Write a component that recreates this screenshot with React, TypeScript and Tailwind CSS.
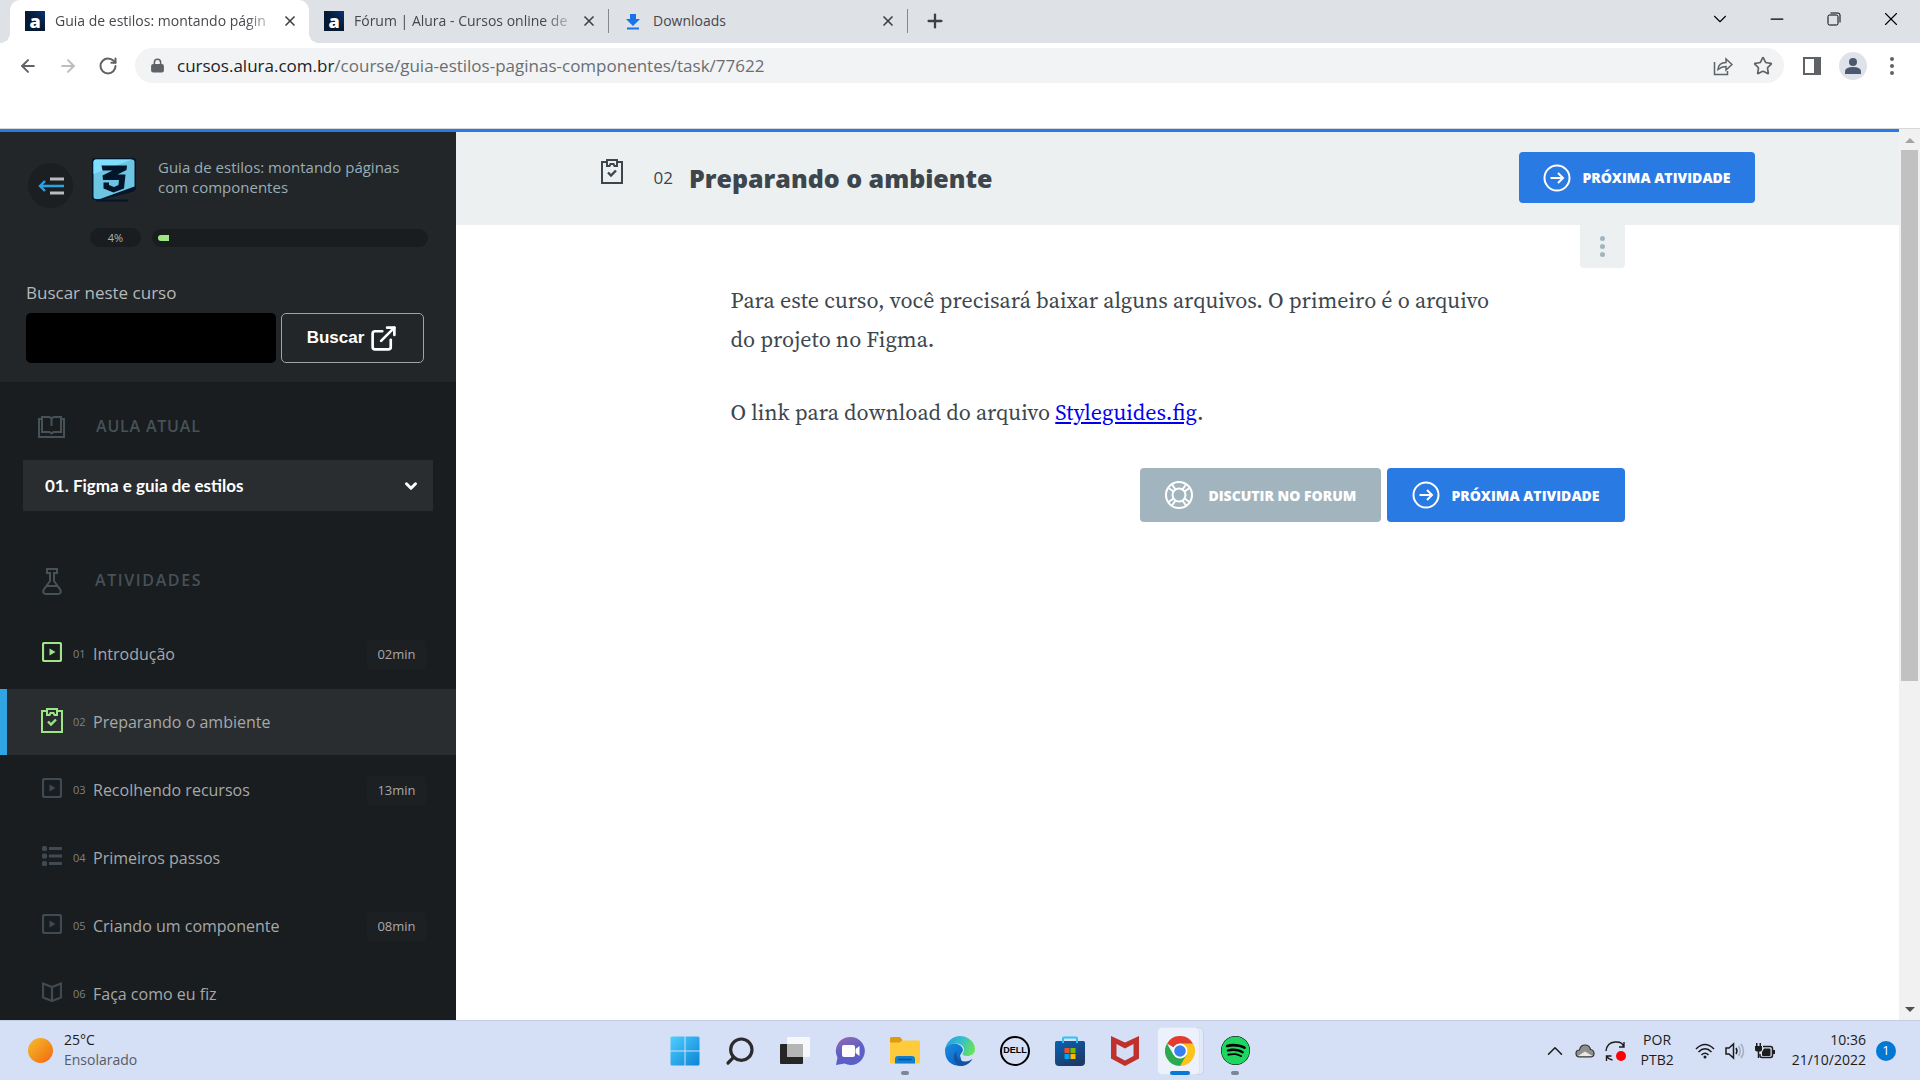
import React, { useState } from "react";
import {
  ArrowLeft,
  ArrowRight,
  ChevronDown,
  ChevronUp,
  ExternalLink,
  Lock,
  Minus,
  Plus,
  RotateCw,
  Search,
  Star,
  X,
} from "lucide-react";
import { FaSpotify } from "react-icons/fa";

// ===== TYPES =====
type ActivityKind = "video" | "clipboard" | "list" | "book";

interface Activity {
  number: string;
  title: string;
  kind: ActivityKind;
  duration?: string;
  done?: boolean;
}

interface Tab {
  title: string;
  icon: "alura" | "download";
}

// ===== DATA =====
const tabs: Tab[] = [
  { title: "Guia de estilos: montando págin", icon: "alura" },
  { title: "Fórum | Alura - Cursos online de", icon: "alura" },
  { title: "Downloads", icon: "download" },
];

const activities: Activity[] = [
  { number: "01", title: "Introdução", kind: "video", duration: "02min", done: true },
  { number: "02", title: "Preparando o ambiente", kind: "clipboard", done: true },
  { number: "03", title: "Recolhendo recursos", kind: "video", duration: "13min" },
  { number: "04", title: "Primeiros passos", kind: "list" },
  { number: "05", title: "Criando um componente", kind: "video", duration: "08min" },
  { number: "06", title: "Faça como eu fiz", kind: "book" },
];

const progress = 4;

// ===== ICONS =====
function ClipboardIcon({ className }: { className?: string }) {
  return (
    <svg viewBox="0 0 22 25" className={className} fill="none" stroke="currentColor" strokeWidth="2">
      <path d="M5.500 3H1v21h20V3h-4.500" />
      <path d="M6 1h10v6h-2.500L12.500 5h-3L8.500 7H6z" />
      <path d="M7 13.500l3 3 5-5" strokeWidth="2.400" />
    </svg>
  );
}

function ActivityIcon({ kind }: { kind: ActivityKind }) {
  if (kind === "clipboard") {
    return <ClipboardIcon className="h-[25px] w-[22px]" />;
  }
  if (kind === "list") {
    return (
      <svg viewBox="0 0 20 20" className="size-5" fill="currentColor">
        <rect x="0" y="0" width="5" height="5" rx="1.500" />
        <rect x="0" y="7.500" width="5" height="5" rx="1.500" />
        <rect x="0" y="15" width="5" height="5" rx="1.500" />
        <path d="M7 1h13v3H7zM7 8.500h13v3H7zM7 16h13v3H7z" />
      </svg>
    );
  }
  if (kind === "book") {
    return (
      <svg viewBox="0 0 20 20" className="size-5" fill="none" stroke="currentColor" strokeWidth="2.200">
        <path d="M1 1.500l9 3.500 9-3.500v14L10 19l-9-3.500zM10 5v14" />
      </svg>
    );
  }
  return (
    <svg viewBox="0 0 20 20" className="size-5" fill="none" stroke="currentColor" strokeWidth="2.200">
      <rect x="1" y="1" width="18" height="18" rx="1.500" />
      <path d="M7.500 6.500v7l6-3.500z" fill="currentColor" stroke="none" />
    </svg>
  );
}

function CircleArrowIcon() {
  return (
    <svg viewBox="0 0 28 28" className="size-7" fill="none" stroke="currentColor" strokeWidth="2">
      <circle cx="14" cy="14" r="12.500" />
      <path d="M7.500 14h12M15 9l5 5-5 5" />
    </svg>
  );
}

function LifebuoyIcon() {
  return (
    <svg viewBox="0 0 28 28" className="size-7" fill="none" stroke="currentColor" strokeWidth="2">
      <circle cx="14" cy="14" r="13" />
      <circle cx="14" cy="14" r="6.500" />
      <path d="M10.500 8.500L7 3.500M8.500 10.500L3.500 7M17.500 8.500L21 3.500M19.500 10.500L24.500 7M10.500 19.500L7 24.500M8.500 17.500L3.500 21M17.500 19.500L21 24.500M19.500 17.500L24.500 21" />
    </svg>
  );
}

function CourseLogo() {
  return (
    <svg viewBox="0 0 46 45" className="h-[45px] w-[46px] shrink-0">
      <path d="M4 1h38q3 0 3 3v28l-7 8v3H4q-3 0-3-3V4q0-3 3-3z" fill="#03152a" />
      <path d="M5 2.500h36q2.500 0 2.500 2.500v24.500L9 42H5q-2.500 0-2.500-2.500V5q0-2.500 2.500-2.500z" fill="#6dc5e2" />
      <path d="M5 2.500h36L2.500 17V5q0-2.500 2.500-2.500z" fill="#80dfff" />
      <path d="M45 31v3L9 43l-3 1h32l7-6z" fill="#222628" />
      <path
        d="M10.500 8.500H36l-.500 4.500-9 4.500h8L33 31.500 22.500 35.500 12.500 31.500V25.500h5.500V28l5 2 4.500-2 .500-5H12l-.500-4.500 10-5h-10z"
        fill="#03152a"
      />
      <path d="M5 43.500h32" stroke="#03152a" strokeWidth="2" />
    </svg>
  );
}

function BackMenuIcon() {
  return (
    <svg viewBox="0 0 26 18" className="h-[18px] w-[26px]" fill="none">
      <path d="M12 2h14M12 16h14" stroke="#b9bcbe" strokeWidth="3" />
      <path d="M26 9H2M7 4L2 9l5 5" stroke="#2ba2e2" strokeWidth="2.400" />
    </svg>
  );
}

// ===== BROWSER =====
function TabFavicon({ icon }: { icon: Tab["icon"] }) {
  if (icon === "download") {
    return (
      <svg viewBox="0 0 20 20" className="size-5 shrink-0" fill="#1a73e8">
        <path d="M7 3h6v5h4l-7 7-7-7h4zM4 16.500h12v2H4z" />
      </svg>
    );
  }
  return (
    <span className="flex size-5 shrink-0 items-center justify-center bg-gradient-to-bl from-[#06357a] to-[#051933] to-50% font-['Open_Sans',sans-serif] text-[18px] leading-[18px] font-extrabold text-white">
      a
    </span>
  );
}

function TabStrip() {
  return (
    <div className="flex h-[43px] bg-[#dee1e6] pl-[10px]">
      {tabs.map((tab, index) => {
        const active = index === 0;
        return (
          <div
            key={tab.title}
            className={`relative flex w-[299px] items-center gap-[10px] pr-[9px] pb-[2px] pl-[15px] ${
              active ? "rounded-t-[10px] bg-white" : ""
            }`}
          >
            {active && (
              <>
                <span className="absolute bottom-0 -left-[10px] size-[10px] bg-[radial-gradient(circle_at_0_0,#dee1e6_10px,white_10px)]" />
                <span className="absolute -right-[10px] bottom-0 size-[10px] bg-[radial-gradient(circle_at_100%_0,#dee1e6_10px,white_10px)]" />
              </>
            )}
            {index === 2 && <span className="absolute left-0 h-6 w-px bg-[#84888d]" />}
            <TabFavicon icon={tab.icon} />
            <span
              className={`flex-1 text-[14px] leading-5 whitespace-nowrap text-[#45484c] ${
                tab.icon === "alura" ? "mask-r-from-[190px] mask-r-to-[224px]" : ""
              }`}
            >
              {tab.title}
            </span>
            <button type="button" aria-label="Fechar guia" className="flex size-5 items-center justify-center">
              <X className="size-4 text-[#3c4043]" strokeWidth={2.5} />
            </button>
          </div>
        );
      })}
      <div className="flex items-center gap-[16px] pb-[2px]">
        <span className="h-6 w-px bg-[#84888d]" />
        <button type="button" aria-label="Nova guia">
          <Plus className="size-[22px] text-[#3c4043]" strokeWidth={2.5} />
        </button>
      </div>
      <div className="mr-px ml-auto flex h-[37px] text-black">
        <button type="button" aria-label="Pesquisar guias" className="flex w-[57px] items-center justify-center">
          <ChevronDown className="size-[22px]" strokeWidth={1.2} />
        </button>
        <button type="button" aria-label="Minimizar" className="flex w-[57px] items-center justify-center">
          <Minus className="size-[20px]" strokeWidth={1.5} />
        </button>
        <button type="button" aria-label="Restaurar" className="flex w-[57px] items-center justify-center">
          <svg viewBox="0 0 14 14" className="size-[14px]" fill="none" stroke="currentColor">
            <rect x="1" y="3" width="10" height="10" rx="1.500" />
            <path d="M3.500 1H11q2 0 2 2v7.500" />
          </svg>
        </button>
        <button type="button" aria-label="Fechar" className="flex w-[57px] items-center justify-center">
          <X className="size-[22px]" strokeWidth={1.2} />
        </button>
      </div>
    </div>
  );
}

function AddressBar() {
  return (
    <div className="flex h-[45px] items-center bg-white pl-[18px]">
      <div className="flex gap-5 text-[#5f6368]">
        <button type="button" aria-label="Voltar">
          <ArrowLeft className="size-5" strokeWidth={2.4} />
        </button>
        <button type="button" aria-label="Avançar" className="text-[#bcbec1]">
          <ArrowRight className="size-5" strokeWidth={2.4} />
        </button>
        <button type="button" aria-label="Recarregar">
          <RotateCw className="size-5" strokeWidth={2.4} />
        </button>
      </div>
      <div className="ml-[17px] flex h-[35px] flex-1 items-center rounded-full bg-[#f1f3f4] pr-[11px] pl-[15px] text-[#5f6368]">
        <Lock className="size-[15px] [&_rect]:fill-current" strokeWidth={2.5} />
        <a
          href="https://cursos.alura.com.br/course/guia-estilos-paginas-componentes/task/77622"
          className="ml-[12px] text-[17px] leading-6 text-[#6a6e73]"
        >
          <span className="text-[#202124]">cursos.alura.com.br</span>
          /course/guia-estilos-paginas-componentes/task/77622
        </a>
        <button type="button" aria-label="Compartilhar" className="ml-auto">
          <svg viewBox="0 0 20 20" className="size-5" fill="none" stroke="currentColor" strokeWidth="1.500">
            <path d="M1.500 6v12.500h13V15" />
            <path d="M5 13.500q.500-7 8-7V3L19 8.500 13 14v-3.500q-4.500 0-8 3z" />
          </svg>
        </button>
        <button type="button" aria-label="Favoritos" className="ml-5">
          <Star className="size-5" strokeWidth={2} />
        </button>
      </div>
      <div className="flex items-center text-[#5f6368]">
        <button type="button" aria-label="Painel lateral" className="ml-[19px]">
          <svg viewBox="0 0 18 18" className="size-[18px]">
            <rect x="1" y="1" width="16" height="16" fill="white" stroke="currentColor" strokeWidth="2" />
            <path d="M11 1h6v16h-6z" fill="currentColor" />
          </svg>
        </button>
        <button type="button" aria-label="Perfil" className="ml-[18px]">
          <svg viewBox="0 0 28 28" className="size-7">
            <circle cx="14" cy="14" r="14" fill="#dfe3e9" />
            <circle cx="14" cy="10" r="4" fill="#4b5970" />
            <path d="M6 22v-2.500q0-4.500 8-4.500t8 4.500V22z" fill="#4b5970" />
          </svg>
        </button>
        <button type="button" aria-label="Mais opções" className="mr-5 ml-[17px] flex w-4 flex-col items-center gap-[3px]">
          <span className="size-1 rounded-full bg-current" />
          <span className="size-1 rounded-full bg-current" />
          <span className="size-1 rounded-full bg-current" />
        </button>
      </div>
    </div>
  );
}

// ===== SIDEBAR =====
function CourseHeader() {
  return (
    <div className="bg-[#222628] px-[26px] pt-[25px] pb-[19px]">
      <div className="flex items-start gap-[18px] pl-[2px]">
        <button
          type="button"
          aria-label="Voltar"
          className="mt-[6px] flex size-[45px] items-center justify-center rounded-full bg-[#1b1f21]"
        >
          <BackMenuIcon />
        </button>
        <CourseLogo />
        <h2 className="ml-[3px] w-[260px] text-[15px] leading-5 text-[#98adb7]">
          Guia de estilos: montando páginas com componentes
        </h2>
      </div>
      <div className="mt-5 flex items-center gap-[11px] pl-16">
        <span className="w-[51px] rounded-full bg-[#191d20] text-center text-[11px] leading-[19px] text-[#a8b4ba]">
          {progress}%
        </span>
        <div className="mr-[2px] flex h-[18px] w-[276px] items-center rounded-full bg-[#191d20] px-[6px]">
          <div className="h-[6px] rounded-l-full bg-[#9ee585]" style={{ width: `${progress}%` }} />
        </div>
      </div>
      <form className="mt-[34px]" onSubmit={(e) => e.preventDefault()}>
        <label htmlFor="busca" className="block text-[17px] leading-6 text-[#b6b8b9]">
          Buscar neste curso
        </label>
        <div className="mt-2 flex gap-[5px]">
          <input id="busca" type="text" className="h-[50px] w-[250px] rounded-[5px] bg-black px-3 text-white" />
          <button
            type="submit"
            className="flex h-[50px] w-[143px] items-center justify-center gap-[5px] rounded-[5px] border border-[#a0a2a3] font-['Liberation_Sans',Arial,sans-serif] text-[17px] font-bold text-white"
          >
            Buscar
            <ExternalLink className="size-[29px]" strokeWidth={2.2} />
          </button>
        </div>
      </form>
    </div>
  );
}

function Sidebar() {
  const [lesson, setLesson] = useState("01");

  return (
    <aside className="w-[456px] shrink-0 overflow-hidden bg-[#191d20]">
      <CourseHeader />

      {/* Aula atual */}
      <div className="mt-[30px] flex h-[30px] items-center gap-[31px] pl-[38px] text-[#465158]">
        <svg viewBox="0 0 27 22" className="h-[22px] w-[27px]" fill="none" stroke="currentColor" strokeWidth="2">
          <path d="M4 3H1v18h25V3h-3" />
          <path d="M4 1h7.500l2 1.500 2-1.500H23v15h-7.500l-2 1.500-2-1.500H4zM13.500 3v7" />
        </svg>
        <h3 className="pb-[2px] text-[16px] font-semibold tracking-wider uppercase">Aula atual</h3>
      </div>
      <div className="relative mx-[23px] mt-[18px]">
        <select
          aria-label="Aula atual"
          value={lesson}
          onChange={(e) => setLesson(e.target.value)}
          className="h-[51px] w-[410px] appearance-none bg-[#292d2f] pl-[22px] font-['Lato',sans-serif] text-[17px] font-bold text-white"
        >
          <option value="01">01. Figma e guia de estilos</option>
        </select>
        <ChevronDown
          className="pointer-events-none absolute top-[17px] right-[13px] size-[18px] text-white"
          strokeWidth={4}
        />
      </div>

      {/* Atividades */}
      <div className="mt-[55px] flex h-[30px] items-center gap-[33px] pl-[42px] text-[#465158]">
        <svg viewBox="0 0 20 27" className="h-[27px] w-[20px]" fill="none" stroke="currentColor" strokeWidth="2">
          <path d="M5 1h10v4h-3v8l6.500 9q1 4-2.500 4H4q-3.500 0-2.500-4L8 13V5H5zM5 18h10" />
        </svg>
        <h3 className="pb-[2px] text-[16px] font-semibold tracking-widest uppercase">Atividades</h3>
      </div>
      <ul className="mt-[25px] flex flex-col gap-[2px]">
        {activities.map((activity) => {
          const current = activity.number === "02";
          return (
            <li key={activity.number}>
              <a
                href="#"
                className={`flex h-[66px] items-center border-l-[7px] pr-[30px] pl-[34px] ${
                  current ? "border-[#31a5e4] bg-[#292d2f]" : "border-transparent"
                }`}
              >
                <span
                  className={`-mt-1 flex w-[22px] justify-center ${
                    activity.done ? "text-[#9ee585]" : "text-[#3f4a52]"
                  }`}
                >
                  <ActivityIcon kind={activity.kind} />
                </span>
                <span className="ml-[10px] w-[20px] text-[11px] leading-6 text-[#7c8184]">{activity.number}</span>
                <span className="text-[16px] leading-6 text-[#a6a8a9]">{activity.title}</span>
                {activity.duration && (
                  <span className="ml-auto w-[59px] rounded bg-[#1d2022] text-center text-[13px] leading-[29px] text-[#a6a8a9]">
                    {activity.duration}
                  </span>
                )}
              </a>
            </li>
          );
        })}
      </ul>
    </aside>
  );
}

// ===== MAIN CONTENT =====
function TaskContent() {
  return (
    <main className="min-w-0 flex-1 overflow-hidden bg-white">
      <header className="bg-[#ecf0f1]">
        <div className="mx-auto flex h-[93px] max-w-[1154px] items-center pb-[2px] text-[#3d464d]">
          <ClipboardIcon className="-mt-[12px] h-[25px] w-[22px]" />
          <span className="ml-[31px] text-[17px] leading-6">02</span>
          <h1 className="ml-[16px] text-[25px] leading-9 font-extrabold">Preparando o ambiente</h1>
          <a
            href="#"
            className="ml-auto flex h-[51px] items-center gap-[11px] rounded-[4px] bg-[#2a7ae4] px-6 text-[14px] font-extrabold text-white uppercase"
          >
            <CircleArrowIcon />
            Próxima Atividade
          </a>
        </div>
      </header>
      <div className="mx-auto max-w-[894px]">
        <button
          type="button"
          aria-label="Opções da atividade"
          className="ml-auto flex h-[43px] w-[45px] flex-col items-center justify-center gap-[3px] rounded-b-[4px] bg-[#ecf0f1]"
        >
          <span className="size-[5px] rounded-full bg-[#a2b4bd]" />
          <span className="size-[5px] rounded-full bg-[#a2b4bd]" />
          <span className="size-[5px] rounded-full bg-[#a2b4bd]" />
        </button>
        <div className="mt-[13px] max-w-[800px] space-y-[34px] font-['Source_Serif_Pro','Source_Serif_4','Liberation_Serif',serif] text-[22px] leading-[39px] text-[#3d464d] [font-optical-sizing:none]">
          <p>
            Para este curso, você precisará baixar alguns arquivos. O primeiro é o arquivo
            <br />
            do projeto no Figma.
          </p>
          <p>
            O link para download do arquivo{" "}
            <a href="#" className="text-[#0000ee] underline">
              Styleguides.fig
            </a>
            .
          </p>
        </div>
        <div className="mt-9 flex justify-end gap-[6px] text-[14px] font-extrabold text-white uppercase">
          <a href="#" className="flex h-[54px] items-center gap-[15px] rounded-[4px] bg-[#a2b5be] px-[25px]">
            <LifebuoyIcon />
            Discutir no Forum
          </a>
          <a href="#" className="flex h-[54px] items-center gap-[11px] rounded-[4px] bg-[#2a7ae4] px-[25px]">
            <CircleArrowIcon />
            Próxima Atividade
          </a>
        </div>
      </div>
    </main>
  );
}

function Scrollbar() {
  return (
    <div className="flex w-[21px] shrink-0 flex-col items-center bg-[#f1f1f1]">
      <svg viewBox="0 0 21 21" className="size-[21px]">
        <path d="M6 14h10l-5-5z" fill="#a3a3a3" />
      </svg>
      <div className="min-h-0 w-[17px] flex-1">
        <div className="h-5/8 bg-[#c1c1c1]" />
      </div>
      <svg viewBox="0 0 21 21" className="size-[21px]">
        <path d="M6 8h10l-5 5z" fill="#505050" />
      </svg>
    </div>
  );
}

// ===== TASKBAR =====
function TaskbarIcons() {
  return (
    <div className="flex items-center">
      <button type="button" aria-label="Iniciar" className="flex h-[58px] w-[55px] items-center justify-center">
        <svg viewBox="0 0 30 30" className="size-[30px]">
          <defs>
            <linearGradient id="win" x1="0" y1="0" x2="1" y2="1" gradientUnits="objectBoundingBox">
              <stop offset="0" stopColor="#4fcfff" />
              <stop offset="1" stopColor="#0a84d6" />
            </linearGradient>
          </defs>
          <path
            d="M2 .500h12.500v14H.500V2q0-1.500 1.500-1.500zM15.500.500H28q1.500 0 1.500 1.500v12.500h-14zM.500 15.500h14v14H2q-1.500 0-1.500-1.500zM15.500 15.500h14V28q0 1.500-1.500 1.500H15.500z"
            fill="url(#win)"
          />
        </svg>
      </button>
      <button type="button" aria-label="Pesquisar" className="flex h-[58px] w-[55px] items-center justify-center">
        <Search className="size-[32px] -scale-x-100 text-[#2b2b2d]" strokeWidth={2.4} />
      </button>
      <button type="button" aria-label="Visão de tarefas" className="flex h-[58px] w-[55px] items-center justify-center">
        <svg viewBox="0 0 30 28" className="h-[28px] w-[30px]">
          <rect x="0" y="7" width="23" height="20" rx="1" fill="#262626" />
          <rect x="7" y="0" width="23" height="20" rx="1" fill="#f7f8fa" />
          <path d="M7 7h16v13H7z" fill="#b5b5b5" />
        </svg>
      </button>
      <button type="button" aria-label="Chat" className="flex h-[58px] w-[55px] items-center justify-center">
        <svg viewBox="0 0 30 30" className="size-[30px]">
          <defs>
            <linearGradient id="chat" x1="0" y1="0" x2="0.400" y2="1">
              <stop offset="0" stopColor="#9a6cae" />
              <stop offset="0.600" stopColor="#5b5fc7" />
            </linearGradient>
          </defs>
          <path d="M15.500 1a14 14 0 1 1-6 26.500L1 29l1.500-7.500A14 14 0 0 1 15.500 1z" fill="url(#chat)" />
          <rect x="7" y="9" width="13" height="12" rx="2" fill="white" />
          <path d="M20.500 13l4-3v10l-4-3z" fill="white" />
        </svg>
      </button>
      <button
        type="button"
        aria-label="Explorador de Arquivos"
        className="relative flex h-[58px] w-[55px] items-center justify-center"
      >
        <svg viewBox="0 0 30 27" className="h-[27px] w-[30px]">
          <path d="M0 1.500Q0 0 1.500 0H10l3 3.500h-1L9 7H0z" fill="#dd9c10" />
          <path d="M0 5.500h10l2.500-2h16Q30 3.500 30 5v20q0 1.500-1.500 1.500h-27Q0 26.500 0 25z" fill="#ffcb3b" />
          <path d="M5 26.500V22q0-3 3-3h14q3 0 3 3v4.500z" fill="#0f7fd0" />
          <path d="M8.500 22.500h13" stroke="#0a4d92" strokeWidth="1.500" />
        </svg>
        <span className="absolute bottom-[5px] h-1 w-2 rounded-full bg-[#7f8594]" />
      </button>
      <button type="button" aria-label="Edge" className="flex h-[58px] w-[55px] items-center justify-center">
        <svg viewBox="0 0 30 30" className="size-[30px]">
          <defs>
            <linearGradient id="edgeTop" x1="0" y1="0.300" x2="1" y2="0.600">
              <stop offset="0" stopColor="#2b9fe0" />
              <stop offset="0.500" stopColor="#35c1c9" />
              <stop offset="1" stopColor="#6be353" />
            </linearGradient>
            <linearGradient id="edgeLeft" x1="0" y1="0" x2="0.600" y2="1">
              <stop offset="0" stopColor="#1b8fe0" />
              <stop offset="1" stopColor="#0b63c4" />
            </linearGradient>
          </defs>
          <path d="M0 14C0 9 5 7 10 7.500c5 .500 8 4 8 7l-3 5 3 10.200Q16.500 30 15 30 0 29 0 14z" fill="url(#edgeLeft)" />
          <path d="M11.500 15c-1.500 5 2 10.500 8.500 10.500 3.500 0 5.500-1.500 7.500-2.500C25 27.500 20 30 16.500 30 8.500 29.500 7 20 11.500 15z" fill="#14539f" />
          <path
            d="M.500 12C2 5 8 0 15 0c8 0 15 6 15 13 0 5-4 7-7.500 7-3.500 0-5-1-5-2 0-1 1.500-1.500 1.500-4.500C19 10 15 7.500 11 7.500 6 7.500 2 10 .500 12z"
            fill="url(#edgeTop)"
          />
        </svg>
      </button>
      <button type="button" aria-label="Dell" className="flex h-[58px] w-[55px] items-center justify-center">
        <span className="flex size-[30px] items-center justify-center rounded-full border-2 border-black font-['Liberation_Sans',Arial,sans-serif] text-[9px] leading-none font-bold text-black">
          DELL
        </span>
      </button>
      <button type="button" aria-label="Microsoft Store" className="flex h-[58px] w-[55px] items-center justify-center">
        <svg viewBox="0 0 30 30" className="size-[30px]">
          <defs>
            <linearGradient id="store" x1="0" y1="0" x2="0.600" y2="1">
              <stop offset="0" stopColor="#0a62b5" />
              <stop offset="1" stopColor="#1d3a66" />
            </linearGradient>
          </defs>
          <path d="M1.500 5h27Q30 5 30 6.500V26q0 4-4 4H4q-4 0-4-4V6.500Q0 5 1.500 5z" fill="url(#store)" />
          <path d="M8 7V2.500Q8 1.500 9 1.500h12q1 0 1 1V7" fill="none" stroke="#2cc4f5" strokeWidth="2" />
          <path d="M9.500 12h5v5h-5z" fill="#f25022" />
          <path d="M15.500 12h5v5h-5z" fill="#7fba00" />
          <path d="M9.500 18h5v5h-5z" fill="#00a4ef" />
          <path d="M15.500 18h5v5h-5z" fill="#ffb900" />
        </svg>
      </button>
      <button type="button" aria-label="McAfee" className="flex h-[58px] w-[55px] items-center justify-center">
        <svg viewBox="0 0 28 30" className="h-[30px] w-[28px]">
          <path d="M0 0l14 6.500L28 0v22.500L14 30 0 22.500z" fill="#c0302c" />
          <path d="M5.500 8L14 12.500 22.500 8v12L14 24.500 5.500 20z" fill="#d4dff6" />
        </svg>
      </button>
      <button type="button" aria-label="Chrome" className="relative flex h-[58px] w-[55px] items-center justify-center">
        <span className="absolute top-[5px] left-[9px] h-[48px] w-[42px] rounded-[5px] border border-[#c9d2e6] bg-[#e2e9f9]" />
        <span className="absolute top-[5px] left-[4px] h-[48px] w-[43px] rounded-[5px] border border-[#dce3f2] bg-[#edf1fb]" />
        <svg viewBox="0 0 30 30" className="relative size-[30px]">
          <path d="M15 15L2 7.500A15 15 0 0 1 28 7.500z" fill="#e33b2e" />
          <path d="M15 15V7.500h13A15 15 0 0 1 15 30z" fill="#fcc31e" />
          <path d="M15 30A15 15 0 0 1 2 7.500L8.500 18.700 21.500 18.700z" fill="#2da94f" />
          <circle cx="15" cy="15" r="7.500" fill="white" />
          <circle cx="15" cy="15" r="5.800" fill="#3a7ff0" />
        </svg>
        <span className="absolute bottom-[5px] h-1 w-5 rounded-full bg-[#0a78d4]" />
      </button>
      <button type="button" aria-label="Spotify" className="relative flex h-[58px] w-[55px] items-center justify-center">
        <FaSpotify className="size-[29px] rounded-full bg-black text-[#1ed760]" />
        <span className="absolute bottom-[5px] h-1 w-2 rounded-full bg-[#7f8594]" />
      </button>
    </div>
  );
}

function SystemTray() {
  return (
    <div className="flex items-center justify-end pr-6 text-[14px] leading-[20px] text-[#1c1c1c]">
      <ChevronUp className="size-[26px]" strokeWidth={1.4} />
      <svg viewBox="0 0 20 14" className="ml-[7px] h-[14px] w-5" stroke="#333" strokeWidth="1.200">
        <path d="M4.500 13Q1 13 1 9.500T4.500 6Q5.500 1 10 1t5.500 4.500Q19 6 19 9.500T15.500 13z" fill="#8f8f8f" />
        <path d="M3 12l7-4.500L17.500 12z" fill="#e8e8e8" stroke="none" />
      </svg>
      <span className="relative ml-[10px] size-5">
        <svg viewBox="0 0 20 20" className="size-5" fill="none" stroke="currentColor" strokeWidth="1.400">
          <path d="M1 10Q2 1.500 10 1t8.500 5M19 1v5h-5M1.500 20v-5h5M1.500 15q2 3.500 6 4" />
        </svg>
        <span className="absolute -right-[1px] bottom-0 size-[10px] rounded-full bg-[#ff0000]" />
      </span>
      <div className="ml-[16px] pb-[2px] text-center">
        <div>POR</div>
        <div>PTB2</div>
      </div>
      <svg viewBox="0 0 20 16" className="ml-[21px] h-4 w-5" fill="none" stroke="currentColor" strokeWidth="1.600">
        <path d="M1 6q9-9 18 0M3.500 9q6.500-6.500 13 0M6.500 12q3.500-3.500 7 0" />
        <circle cx="10" cy="14" r="1.500" fill="currentColor" stroke="none" />
      </svg>
      <svg viewBox="0 0 20 18" className="ml-[10px] h-[18px] w-5" fill="none" stroke="currentColor" strokeWidth="1.500">
        <path d="M1 6v6h3l4.500 4V2L4 6z" />
        <path d="M11 6q2 3 0 6" />
        <path d="M13.500 4q3.500 5 0 10M16 2q5 7 0 14" stroke="#a3acbf" />
      </svg>
      <svg viewBox="0 0 20 16" className="ml-[10px] h-4 w-5" fill="none" stroke="currentColor" strokeWidth="1.500">
        <path d="M8 3.500h7.500q2 0 2 2v7q0 2-2 2H7q-2 0-2-2V11" />
        <path
          d="M9 5.500h5.500q1 0 1 1V12q0 1-1 1H8q-1 0-1-1V9zM0 3h7v3.500q0 2-2 2H2q-2 0-2-2zM1 0h1.500v3H1zM4.500 0H6v3H4.500zM18 7h2v4h-2z"
          fill="currentColor"
          stroke="none"
        />
        <path d="M3.500 8v7" />
      </svg>
      <div className="ml-[17px] pb-[2px] text-right">
        <div>10:36</div>
        <div>21/10/2022</div>
      </div>
      <span className="ml-[10px] flex size-5 items-center justify-center rounded-full bg-[#0078d4] text-[13px] leading-none text-white">
        1
      </span>
    </div>
  );
}

function Taskbar() {
  return (
    <footer className="grid h-[60px] shrink-0 grid-cols-[1fr_auto_1fr] items-center border-t border-[#c3cee4] bg-[#d5dff6]">
      <div className="flex items-center gap-[11px] pl-7 text-[14px] leading-[20px]">
        <span className="size-[25px] rounded-full bg-gradient-to-br from-[#f2bd2c] to-[#f1640d]" />
        <div className="pb-[2px]">
          <div className="text-[#1c1c1c]">25°C</div>
          <div className="text-[#565c66]">Ensolarado</div>
        </div>
      </div>
      <TaskbarIcons />
      <SystemTray />
    </footer>
  );
}

function App() {
  return (
    <div className="flex h-screen flex-col overflow-hidden bg-white font-['Open_Sans','Noto_Sans',sans-serif]">
      <div className="shrink-0 border-b border-[#d5d7da] pb-10 font-['Segoe_UI','Open_Sans',sans-serif]">
        <TabStrip />
        <AddressBar />
      </div>
      <div className="flex min-h-0 flex-1">
        <div className="flex min-w-0 flex-1 flex-col border-t-[3px] border-[#2a7ae4]">
          <div className="flex min-h-0 flex-1">
            <Sidebar />
            <TaskContent />
          </div>
        </div>
        <Scrollbar />
      </div>
      <Taskbar />
    </div>
  );
}

export default App;
